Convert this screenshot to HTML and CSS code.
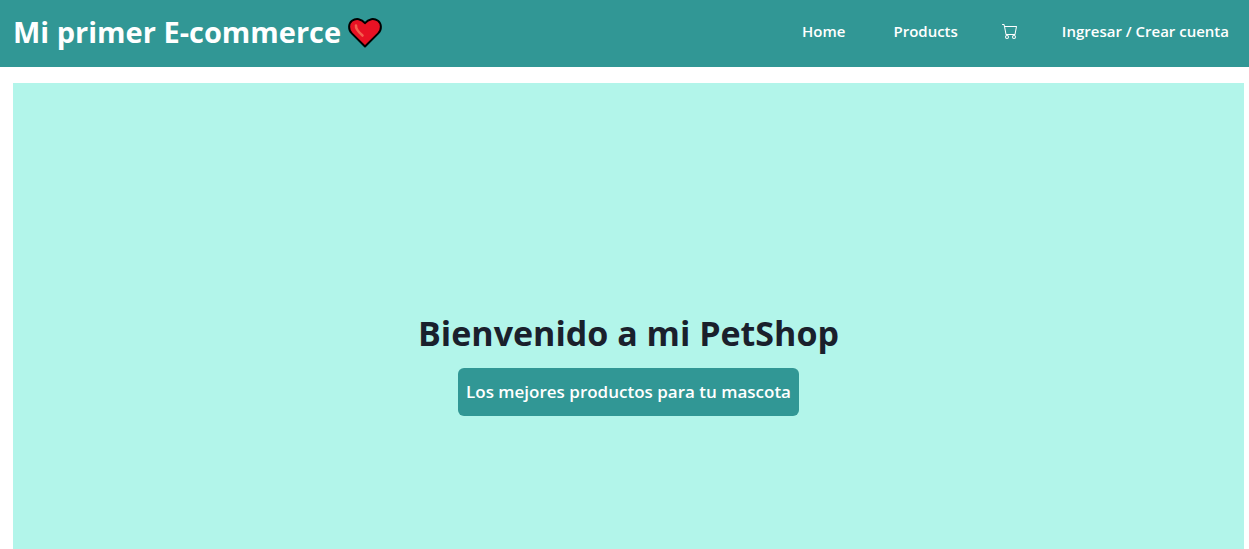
FILE: index.html
```html
<!DOCTYPE html>
<html lang="es">
<head>
<meta charset="utf-8">
<meta name="viewport" content="width=device-width, initial-scale=1">
<title>Mi primer E-commerce</title>
<link rel="stylesheet" href="styles.css">
</head>
<body>
<header class="navbar">
  <h2 class="brand">
    <span>Mi primer E-commerce</span>
    <svg class="heart" viewBox="0 0 34 31" aria-hidden="true">
      <path d="M17 29.500 3.800 16.400C.1 12.700.3 6.600 4 3.800 8 .9 13.400 1.600 17 6.200 20.600 1.600 26 .9 30 3.800 33.700 6.600 33.900 12.700 30.200 16.400Z" fill="#e81224" stroke="#000" stroke-width="2" stroke-linejoin="round"/>
      <path d="M8 8.500C7.500 12 11 15.500 14.500 18.500" fill="none" stroke="#f4604e" stroke-width="2.600" stroke-linecap="round"/>
    </svg>
  </h2>
  <nav class="menu">
    <a href="#home">Home</a>
    <a href="#products">Products</a>
    <a class="cart" href="#cart" aria-label="Carrito">
      <svg viewBox="0 0 16 16" fill="currentColor" aria-hidden="true">
        <path d="M0 1.5A.5.5 0 0 1 .5 1H2a.5.5 0 0 1 .485.379L2.89 3H14.5a.5.5 0 0 1 .491.592l-1.5 8A.5.5 0 0 1 13 12H4a.5.5 0 0 1-.491-.408L2.01 3.607 1.61 2H.5a.5.5 0 0 1-.5-.5zM3.102 4l1.313 7h8.17l1.313-7H3.102zM5 12a2 2 0 1 0 0 4 2 2 0 0 0 0-4zm7 0a2 2 0 1 0 0 4 2 2 0 0 0 0-4zm-7 1a1 1 0 1 1 0 2 1 1 0 0 1 0-2zm7 0a1 1 0 1 1 0 2 1 1 0 0 1 0-2z"/>
      </svg>
    </a>
    <a href="#login">Ingresar / Crear cuenta</a>
  </nav>
</header>
<main class="hero">
  <h1 class="hero-title">Bienvenido a mi PetShop</h1>
  <button class="hero-button" type="button">Los mejores productos para tu mascota</button>
</main>
</body>
</html>
```
FILE: styles.css
```css
* {
  box-sizing: border-box;
}

body {
  display: flex;
  flex-direction: column;
  min-height: 100vh;
  margin: 0;
  background: #fff;
  color: #1a202c;
  font-family: "Segoe UI", "Open Sans", "Noto Sans", sans-serif;
}

.navbar {
  display: flex;
  align-items: flex-start;
  justify-content: space-between;
  padding: 12px 20px 15px 13px;
  background: #319795;
  color: #fff;
}

.brand {
  display: flex;
  align-items: center;
  gap: 7px;
  margin: 0;
  font-size: 29px;
  font-weight: 700;
  line-height: 40px;
}

.heart {
  width: 34px;
  height: 31px;
}

.menu {
  display: flex;
  align-items: center;
  gap: 48px;
  font-size: 15px;
  font-weight: 600;
  line-height: 38px;
}

.menu a {
  color: inherit;
  text-decoration: none;
}

.menu .cart {
  display: flex;
  margin: 0 -4px;
}

.cart svg {
  width: 16px;
  height: 16px;
}

.hero {
  display: flex;
  flex: 1;
  flex-direction: column;
  align-items: center;
  gap: 11px;
  margin: 16px 5px 0 13px;
  padding: 226px 16px 16px;
  background: #b2f5ea;
}

.hero-title {
  margin: 0;
  font-size: 34px;
  font-weight: 700;
  line-height: 48px;
}

.hero-button {
  padding: 10px 8px;
  border: 0;
  border-radius: 6px;
  background: #319795;
  color: #fff;
  font-family: inherit;
  font-size: 17px;
  font-weight: 600;
  line-height: 28px;
}
```
